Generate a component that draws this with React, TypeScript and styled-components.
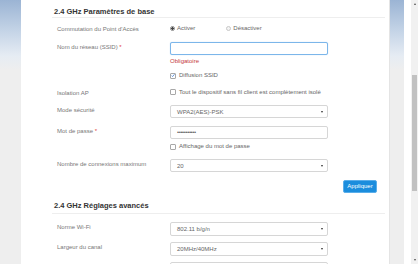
import React from 'react';
import styled, { createGlobalStyle } from 'styled-components';

const GlobalStyle = createGlobalStyle`
  html, body {
    margin: 0;
    padding: 0;
    height: 264px;
    overflow: hidden;
    background: #ffffff;
    font-family: 'Liberation Sans', Arial, sans-serif;
  }
`;

const Page = styled.div`
  display: flex;
  height: 264px;
  overflow: hidden;
`;

const SideBar = styled.div<{ $w: number }>`
  width: ${({ $w }) => $w}px;
  flex: none;
  background: linear-gradient(#9bb4d4 0px, #c3d3e6 30px, #e6ecf3 56px, #eeeeee 70px, #eeeeee 100%);
`;

const Panel = styled.div`
  flex: 1;
  background: #fff;
  padding: 0 4px 0 31px;
  border-right: 1px solid #e4e4e4;
  overflow: hidden;
`;

const Spacer = styled.div`
  width: 7px;
  flex: none;
  background: #fff;
`;

const Scrollbar = styled.div`
  width: 7px;
  flex: none;
  background: #f1f1f1;
  display: flex;
  flex-direction: column;
  align-items: center;
`;

const ScrollArrow = styled.div<{ $up?: boolean }>`
  width: 0;
  height: 0;
  border-left: 1.5px solid transparent;
  border-right: 1.5px solid transparent;
  ${({ $up }) => ($up ? 'border-bottom: 2px solid #505050;' : 'border-top: 2px solid #505050;')}
  margin: ${({ $up }) => ($up ? '3px 0 0' : '0 0 3px')};
`;

const ScrollTrack = styled.div`
  flex: 1;
  width: 100%;
  display: flex;
  flex-direction: column;
  padding-top: 70px;
`;

const ScrollThumb = styled.div`
  width: 5px;
  margin-left: 1px;
  height: 116px;
  background: #c1c1c1;
`;

const SectionTitle = styled.div<{ $pt: number; $pb: number }>`
  font-size: 7.5px;
  font-weight: bold;
  color: #333;
  line-height: 10px;
  padding: ${({ $pt, $pb }) => `${$pt}px 0 ${$pb}px 2px`};
  border-bottom: 1px solid #eeeeee;
`;

const Row = styled.div<{ $mt: number; $end?: boolean }>`
  display: flex;
  align-items: flex-start;
  justify-content: ${({ $end }) => ($end ? 'flex-end' : 'flex-start')};
  margin-top: ${({ $mt }) => $mt}px;
`;

const Label = styled.div`
  width: 113px;
  padding-left: 5px;
  flex: none;
  font-size: 6px;
  line-height: 8px;
  padding-top: 1px;
  color: #777;
  white-space: nowrap;
`;

const Required = styled.span`
  color: #e23b3b;
`;

const Field = styled.div`
  width: 158px;
  flex: none;
`;

const Input = styled.div<{ $focus?: boolean }>`
  box-sizing: border-box;
  height: 13.5px;
  border: 1px solid ${({ $focus }) => ($focus ? '#7cb6ea' : '#d6d6d6')};
  box-shadow: ${({ $focus }) => ($focus ? '0 0 1px rgba(102,175,233,0.6)' : 'none')};
  border-radius: 2px;
  background: #fff;
  font-size: 6px;
  color: #666;
  padding: 0 6px;
  display: flex;
  align-items: center;
  justify-content: space-between;
`;

const Caret = styled.span`
  width: 0;
  height: 0;
  border-left: 1.5px solid transparent;
  border-right: 1.5px solid transparent;
  border-top: 2px solid #333;
  margin-right: -2px;
`;

const Dots = styled.span`
  letter-spacing: -0.4px;
  font-size: 6px;
  line-height: 6px;
  color: #666;
`;

const Hint = styled.div`
  font-size: 6px;
  line-height: 8px;
  color: #c4393b;
`;

const Choice = styled.label<{ $ml?: number }>`
  display: flex;
  align-items: center;
  font-size: 6px;
  line-height: 9px;
  color: #666;
  margin-left: ${({ $ml }) => $ml || 0}px;
  white-space: nowrap;
`;

const Radio = styled.span<{ $on?: boolean }>`
  box-sizing: border-box;
  width: 5px;
  height: 5px;
  border-radius: 50%;
  border: 1px solid ${({ $on }) => ($on ? '#8a8a8a' : '#c8c8c8')};
  background: ${({ $on }) => ($on ? 'radial-gradient(#444 0 1px, #ddd 1.2px)' : '#f4f4f4')};
  margin-right: 2px;
`;

const Box = styled.span`
  box-sizing: border-box;
  width: 6px;
  height: 6px;
  border: 1px solid #a8a8a8;
  border-radius: 1px;
  background: #fff;
  margin-right: 3px;
  display: flex;
  align-items: center;
  justify-content: center;
`;

const Button = styled.button`
  height: 13.6px;
  width: 34px;
  margin-right: 8px;
  padding: 0;
  border: 1px solid #5aaeea;
  border-radius: 2px;
  background: #1b8ddd;
  color: #fff;
  font-family: 'Liberation Sans', Arial, sans-serif;
  font-size: 6px;
  line-height: 11px;
`;

const Check = () => (
  <svg width="5" height="5" viewBox="0 0 10 10">
    <path d="M1.5 5.2 L4 7.6 L8.8 1.8" fill="none" stroke="#2c6fd1" strokeWidth="1.8" />
  </svg>
);

const Checkbox = ({ checked, children }: { checked?: boolean; children: React.ReactNode }) => (
  <Choice>
    <Box>{checked && <Check />}</Box>
    {children}
  </Choice>
);

const Select = ({ value }: { value: string }) => (
  <Input>
    <span>{value}</span>
    <Caret />
  </Input>
);

export default function App() {
  return (
    <>
      <GlobalStyle />
      <Page>
        <SideBar $w={21} />
        <Panel>
          <SectionTitle $pt={7} $pb={0}>2.4 GHz Paramètres de base</SectionTitle>

          <Row $mt={6}>
            <Label>Commutation du Point d'Accès</Label>
            <Choice>
              <Radio $on />
              Activer
            </Choice>
            <Choice $ml={31}>
              <Radio />
              Désactiver
            </Choice>
          </Row>

          <Row $mt={8.7}>
            <Label>
              Nom du réseau (SSID) <Required>*</Required>
            </Label>
            <Field>
              <Input $focus />
            </Field>
          </Row>

          <Row $mt={1.5}>
            <Label />
            <Hint>Obligatoire</Hint>
          </Row>

          <Row $mt={6.8}>
            <Label />
            <Checkbox checked>Diffusion SSID</Checkbox>
          </Row>

          <Row $mt={7.5}>
            <Label>Isolation AP</Label>
            <Checkbox>Tout le dispositif sans fil client est complètement isolé</Checkbox>
          </Row>

          <Row $mt={8}>
            <Label>Mode sécurité</Label>
            <Field>
              <Select value="WPA2(AES)-PSK" />
            </Field>
          </Row>

          <Row $mt={7.2}>
            <Label>
              Mot de passe <Required>*</Required>
            </Label>
            <Field>
              <Input>
                <Dots>•••••••••••</Dots>
              </Input>
            </Field>
          </Row>

          <Row $mt={3}>
            <Label />
            <Checkbox>Affichage du mot de passe</Checkbox>
          </Row>

          <Row $mt={7.8}>
            <Label>Nombre de connexions maximum</Label>
            <Field>
              <Select value="20" />
            </Field>
          </Row>

          <Row $mt={7.2} $end>
            <Button>Appliquer</Button>
          </Row>

          <SectionTitle $pt={8} $pb={2}>2.4 GHz Réglages avancés</SectionTitle>

          <Row $mt={8}>
            <Label>Norme Wi-Fi</Label>
            <Field>
              <Select value="802.11 b/g/n" />
            </Field>
          </Row>

          <Row $mt={6.5}>
            <Label>Largeur du canal</Label>
            <Field>
              <Select value="20MHz/40MHz" />
            </Field>
          </Row>

          <Row $mt={6}>
            <Label />
            <Field>
              <Select value="" />
            </Field>
          </Row>
        </Panel>
        <SideBar $w={14} />
        <Spacer />
        <Scrollbar>
          <ScrollArrow $up />
          <ScrollTrack>
            <ScrollThumb />
          </ScrollTrack>
          <ScrollArrow />
        </Scrollbar>
      </Page>
    </>
  );
}
